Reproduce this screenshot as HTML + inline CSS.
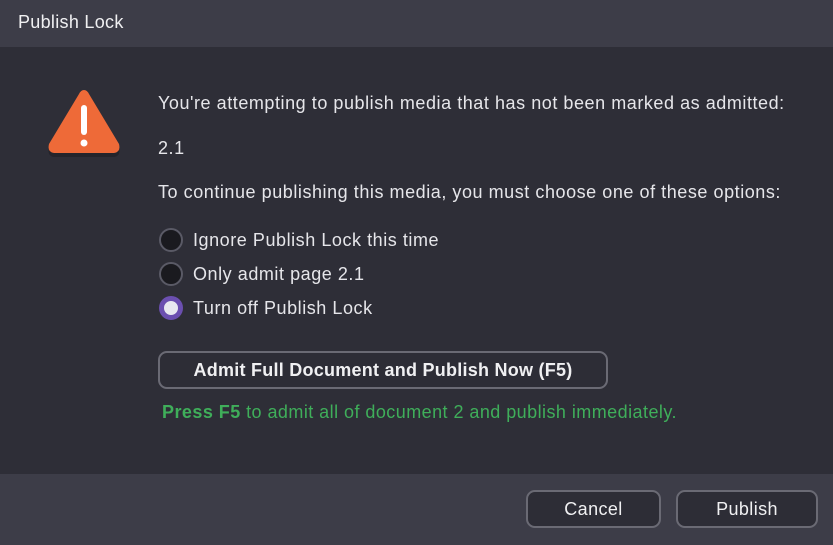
<!DOCTYPE html>
<html><head><style>
body{margin:0;width:833px;height:545px;background:#2b2b33;font-family:"Liberation Sans",sans-serif;color:#e6e6ea;overflow:hidden;position:relative}
.hd{position:absolute;left:0;top:0;width:833px;height:47px;background:#3d3d48;}
.hd span{position:absolute;left:18px;top:12px;font-size:18px;color:#f0f0f2;letter-spacing:0.3px}
.bd{position:absolute;left:0;top:47px;width:833px;height:427px;background:#2e2e37}
.ft{position:absolute;left:0;top:474px;width:833px;height:71px;background:#3d3d48}
.t{position:absolute;font-size:18px;white-space:nowrap;letter-spacing:0.55px}
.r{position:absolute;left:159px;width:24px;height:24px;border-radius:50%;background:#1a1a1f;border:2px solid #5a5a66;box-sizing:border-box}
.btn{position:absolute;border:2px solid #6a6a74;border-radius:9px;background:#2d2d36;box-sizing:border-box;text-align:center;font-size:18px;color:#f0f0f2;letter-spacing:0.4px}
</style></head><body>
<div class="hd"><span>Publish Lock</span></div>
<div class="bd"></div>
<div class="ft"></div>
<svg style="position:absolute;left:42px;top:86px" width="84" height="76" viewBox="0 0 84 76">
<path d="M42 6 Q45 6 47 10 L77 60 Q79 68 72 69 L12 69 Q5 68 7 60 L37 10 Q39 6 42 6Z" fill="#1a1a1f" opacity="0.5" transform="translate(0,2)"/>
<path d="M42 4 Q45 4 47 8 L77 58 Q79 66 72 67 L12 67 Q5 66 7 58 L37 8 Q39 4 42 4Z" fill="#ee6a38"/>
<rect x="39" y="19" width="6" height="30" rx="3" fill="#fff"/>
<circle cx="42" cy="57" r="3.5" fill="#fff"/>
</svg>
<div class="t" style="left:158px;top:93px">You're attempting to publish media that has not been marked as admitted:</div>
<div class="t" style="left:158px;top:138px">2.1</div>
<div class="t" style="left:158px;top:182px">To continue publishing this media, you must choose one of these options:</div>
<div class="r" style="top:228px"></div><div class="t" style="left:193px;top:230px">Ignore Publish Lock this time</div>
<div class="r" style="top:262px"></div><div class="t" style="left:193px;top:264px">Only admit page 2.1</div>
<div class="r" style="top:296px;background:#e8e8f0;border:5px solid #6b4fb0"></div><div class="t" style="left:193px;top:298px">Turn off Publish Lock</div>
<div class="btn" style="left:158px;top:351px;width:450px;height:38px;line-height:34px;font-weight:bold;font-size:18px;letter-spacing:0.25px">Admit Full Document and Publish Now (F5)</div>
<div class="t" style="left:162px;top:402px;color:#3fae5a;letter-spacing:0.45px"><b>Press F5</b> to admit all of document 2 and publish immediately.</div>
<div class="btn" style="left:526px;top:490px;width:135px;height:38px;line-height:34px">Cancel</div>
<div class="btn" style="left:676px;top:490px;width:142px;height:38px;line-height:34px">Publish</div>
</body></html>
